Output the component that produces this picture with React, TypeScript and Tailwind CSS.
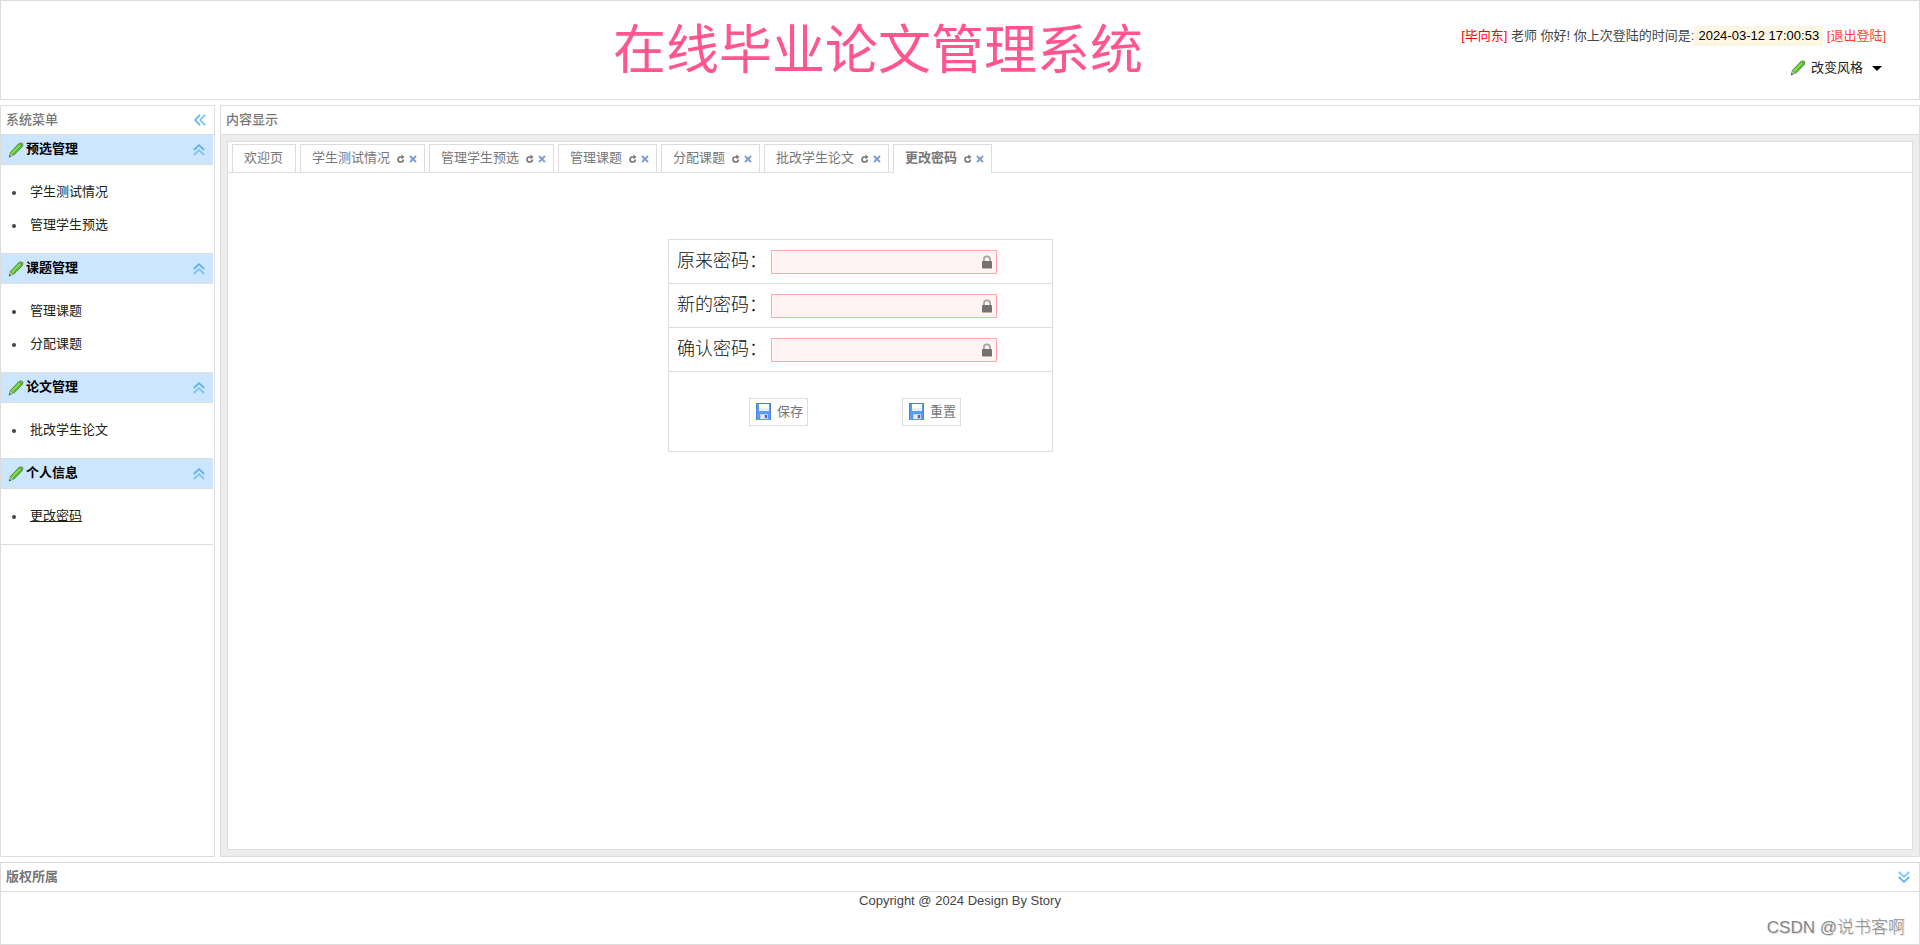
import { useState } from "react";

interface MenuGroup {
  title: string;
  items: string[];
}

const menu: MenuGroup[] = [
  { title: "预选管理", items: ["学生测试情况", "管理学生预选"] },
  { title: "课题管理", items: ["管理课题", "分配课题"] },
  { title: "论文管理", items: ["批改学生论文"] },
  { title: "个人信息", items: ["更改密码"] },
];

const tabs = ["学生测试情况", "管理学生预选", "管理课题", "分配课题", "批改学生论文", "更改密码"];

const fields = [
  { name: "oldPassword", label: "原来密码：" },
  { name: "newPassword", label: "新的密码：" },
  { name: "confirmPassword", label: "确认密码：" },
];

function PencilIcon() {
  return (
    <svg width="16" height="16" viewBox="0 0 16 16" className="shrink-0">
      <path d="M.8 15.3 2 10.4 10.4 1.4Q12.6-.4 14.6 1 16 2.6 14.6 4.8L6 13.4Z" fill="#3c9a32" />
      <path d="M3 10.8 11.2 2.2 12.8 3.4 4.6 12.2Z" fill="#8fdc50" />
      <path d="M4.8 12.2 13 3.6 13.8 4.4 5.6 13Z" fill="#63bd35" />
      <path d="M11 1.6Q12.8.2 14.2 1.4 15.4 2.8 14.2 4.4Z" fill="#7f9c78" />
      <path d="M.8 15.3 2 10.8 5.8 13.2Z" fill="#a9bc9e" />
      <path d="M.8 15.5 1.5 13 3 14.4Z" fill="#3f5148" />
    </svg>
  );
}

function Chevrons({ className = "" }: { className?: string }) {
  return (
    <svg width="12" height="12" viewBox="0 0 12 12" fill="none" strokeWidth="1.8" className={className}>
      <path d="M.8 6 6 1.2 11.2 6" stroke="#62b0ee" />
      <path d="M.8 11 6 6.2 11.2 11" stroke="#7cc4f8" />
    </svg>
  );
}

function RefreshIcon() {
  return (
    <svg width="8" height="9" viewBox="0 0 8 9" fill="none">
      <path d="M5.4 3H3Q1 3.2 1 5.4 1 8 3.6 8 6.4 8 6.4 5.4" stroke="#777" strokeWidth="1.6" />
      <path d="M4.4 .6 7.6 3 4.4 5.2Z" fill="#777" />
    </svg>
  );
}

function CloseIcon() {
  return (
    <svg width="8" height="8" viewBox="0 0 8 8" fill="none">
      <path d="M1 1 7 7M7 1 1 7" stroke="#7d9fd0" strokeWidth="1.9" />
    </svg>
  );
}

function LockIcon() {
  return (
    <svg width="12" height="14" viewBox="0 0 12 14" className="pointer-events-none absolute right-1 top-[5px]">
      <path d="M3 7V4Q3 1.4 6 1.4 9 1.4 9 4V7" fill="none" stroke="#a9a3a3" strokeWidth="1.8" />
      <rect x="1" y="6" width="10" height="7.4" rx=".6" fill="#767171" />
    </svg>
  );
}

function DiskIcon() {
  return (
    <svg width="16" height="17" viewBox="0 0 16 17">
      <rect width="15" height="17" fill="#5a9bf8" />
      <path d="M0 0H15V17H14V1H1V17H0Z" fill="#4a80dc" />
      <rect x="3" y="1" width="10" height="7" fill="#fff" />
      <path d="M3 5H13V8H3Z" fill="#e6eefa" />
      <rect x="4" y="11" width="8" height="5" fill="#c3cbe6" />
      <rect x="5" y="12" width="3" height="4" fill="#e9ecf6" />
      <rect x="9" y="12" width="2" height="3" fill="#5068a8" />
    </svg>
  );
}

export default function App() {
  const [active, setActive] = useState("更改密码");
  const [form, setForm] = useState({ oldPassword: "", newPassword: "", confirmPassword: "" });

  function handleChange(e: React.ChangeEvent<HTMLInputElement>) {
    setForm((f) => ({ ...f, [e.target.name]: e.target.value }));
  }

  function handleReset() {
    setForm({ oldPassword: "", newPassword: "", confirmPassword: "" });
  }

  return (
    <div className="relative flex min-h-screen flex-col gap-[5px] bg-white font-['Liberation_Sans','Noto_Sans_CJK_SC',sans-serif] text-[13px] leading-5 text-[#444]">
      <header className="grid h-[100px] grid-cols-[294px_1fr_auto] border border-[#ddd] pr-[33px]">
        <span />
        <h1 className="pt-[14px] text-center text-[53px] leading-[72px] text-[#ff5590]">在线毕业论文管理系统</h1>
        <div className="flex flex-col items-end gap-3 pt-[25px]">
          <p className="whitespace-nowrap">
            <span className="text-[#f00]">[毕向东]</span> 老师 你好! 你上次登陆的时间是:
            <span className="inline-block bg-[#fdf6e2] px-1 text-black">2024-03-12 17:00:53</span>{" "}
            <a href="#logout" className="text-[#ff4030]">[退出登陆]</a>
          </p>
          <button type="button" className="mr-1 flex items-center gap-[5px] text-[#222]">
            <PencilIcon />
            改变风格
            <svg width="10" height="5" viewBox="0 0 10 5" className="ml-1">
              <path d="M0 0H10L5 5Z" fill="#000" />
            </svg>
          </button>
        </div>
      </header>

      <div className="flex flex-1 gap-[5px]">
        <aside className="w-[215px] shrink-0 border border-[#ddd]">
          <div className="flex h-[29px] items-center justify-between border-b border-[#ddd] pl-[5px] pr-2">
            <h2 className="pb-px font-medium text-[#777]">系统菜单</h2>
            <button type="button" aria-label="收起菜单">
              <Chevrons className="-rotate-90" />
            </button>
          </div>
          <nav className="mr-px border-b border-[#ddd]">
            {menu.map((group) => (
              <section key={group.title} className="border-t border-[#ddd] first:border-t-0">
                <h3 className="flex h-[30px] items-center gap-[2px] border-b border-[#ddd] bg-[#cce6ff] pl-[7px] pr-2 font-bold text-black">
                  <PencilIcon />
                  <span className="flex-1 pb-px">{group.title}</span>
                  <Chevrons />
                </h3>
                <ul className="py-[11px] pl-[11px]">
                  {group.items.map((item) => (
                    <li key={item} className="flex h-[33px] items-center gap-[14px]">
                      <span className="size-1 rounded-full bg-[#444]" />
                      <a
                        href="#menu"
                        onClick={() => setActive(item)}
                        className={item === "更改密码" ? "pb-px text-[#221] underline" : "pb-px text-[#221]"}
                      >
                        {item}
                      </a>
                    </li>
                  ))}
                </ul>
              </section>
            ))}
          </nav>
        </aside>

        <main className="flex min-w-0 flex-1 flex-col border border-[#ddd]">
          <div className="flex h-[29px] items-center border-b border-[#ddd] pl-[5px]">
            <h2 className="pb-px font-medium text-[#777]">内容显示</h2>
          </div>
          <div className="flex flex-1 bg-[#ededed] p-[6px]">
            <div className="flex-1 border border-[#ddd] bg-white">
              <div className="flex gap-1 border-b border-[#ddd] pl-1 pt-[2px] text-[#777]">
                <button type="button" className="h-7 border border-b-0 border-[#ddd] pb-px pl-[11px] pr-3">
                  欢迎页
                </button>
                {tabs.map((tab) => (
                  <div
                    key={tab}
                    className={
                      tab === active
                        ? "-mb-px flex h-[29px] items-center border border-b-0 border-[#ddd] bg-white pb-px pl-[11px] pr-[7px] font-bold"
                        : "flex h-7 items-center border border-b-0 border-[#ddd] pl-[11px] pr-[7px]"
                    }
                  >
                    <button type="button" onClick={() => setActive(tab)} className="pb-px">{tab}</button>
                    <button type="button" aria-label="刷新" className="ml-[7px]">
                      <RefreshIcon />
                    </button>
                    <button type="button" aria-label="关闭" className="ml-1">
                      <CloseIcon />
                    </button>
                  </div>
                ))}
              </div>

              <form onSubmit={(e) => e.preventDefault()} className="ml-[440px] mt-[66px] w-[385px] border border-[#ddd]">
                {fields.map((field) => (
                  <div key={field.name} className="flex h-11 items-center border-b border-[#ddd] pl-2">
                    <label htmlFor={field.name} className="w-[94px] pb-[2px] text-lg font-light leading-6 text-[#111]">
                      {field.label}
                    </label>
                    <div className="relative">
                      <input
                        id={field.name}
                        name={field.name}
                        type="password"
                        value={form[field.name as keyof typeof form]}
                        onChange={handleChange}
                        className="block h-6 w-[226px] border border-[#ffa8a8] bg-[#fff3f3] pl-1 pr-5 outline-none"
                      />
                      <LockIcon />
                    </div>
                  </div>
                ))}
                <div className="flex h-[79px] items-center gap-[94px] pl-20 text-[#777]">
                  <button type="submit" className="flex h-7 items-center gap-[5px] border border-[#ddd] pl-[6px] pr-1">
                    <DiskIcon />
                    保存
                  </button>
                  <button type="button" onClick={handleReset} className="flex h-7 items-center gap-[5px] border border-[#ddd] pl-[6px] pr-1">
                    <DiskIcon />
                    重置
                  </button>
                </div>
              </form>
            </div>
          </div>
        </main>
      </div>

      <footer className="h-[83px] border border-[#ddd]">
        <div className="flex h-[29px] items-center justify-between border-b border-[#ddd] pl-[5px] pr-[9px]">
          <h2 className="pb-px font-bold text-[#777]">版权所属</h2>
          <button type="button" aria-label="收起">
            <Chevrons className="rotate-180" />
          </button>
        </div>
        <p className="text-center leading-[18px]">Copyright @ 2024 Design By Story</p>
      </footer>

      <span className="absolute bottom-[5px] right-[15px] text-[17px] font-light leading-6 text-[#888] [text-shadow:1px_1px_0_#ddd]">
        CSDN @说书客啊
      </span>
    </div>
  );
}
